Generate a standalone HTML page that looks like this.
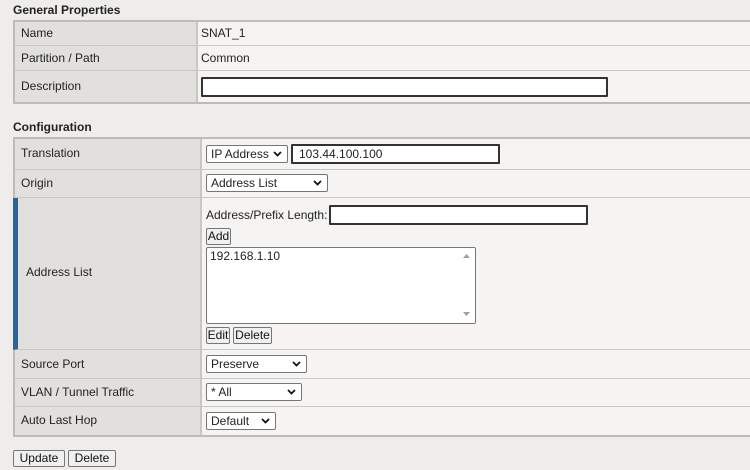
<!DOCTYPE html>
<html><head><style>
body{margin:0;width:750px;height:470px;background:#eeedeb;font-family:"Liberation Sans",Arial,sans-serif;font-size:12px;color:#222;position:relative;overflow:hidden}
.a{position:absolute}
h{position:absolute;font-weight:bold;font-size:12px;left:13px}
.l{position:absolute;background:#e1e0dd;border-bottom:1px solid #c8c7c4;box-sizing:border-box;padding-left:6px}
.v{position:absolute;background:#f5f4f2;border-bottom:1px solid #c8c7c4;border-left:2px solid #c8c7c4;box-sizing:border-box;padding-left:3px;width:560px}
.sel{position:absolute;background:#fff;border:1px solid #767676;border-radius:2px;box-sizing:border-box;height:18px;padding:1px 4px;font-size:12px;line-height:14px}
.sel svg{position:absolute;right:5px;top:5px}
.inp{position:absolute;background:#fff;border:2px solid #333;box-sizing:border-box;border-radius:1px}
.btn{position:absolute;background:#f0f0f0;border:1px solid #767676;border-radius:2px;box-sizing:border-box;height:17px;line-height:15px;padding:0;text-align:center;font-size:12px;color:#111}
</style></head><body>
<h style="top:3px">General Properties</h>
<div class="a" style="left:13px;top:20px;width:737px;height:84px;border:2px solid #bdbcb9;border-right:none;box-sizing:border-box"></div>
<div class="l" style="left:15px;top:22px;width:181px;height:24px;line-height:22px">Name</div>
<div class="v" style="left:196px;top:22px;height:24px;line-height:22px">SNAT_1</div>
<div class="l" style="left:15px;top:46px;width:181px;height:25px;line-height:24px">Partition / Path</div>
<div class="v" style="left:196px;top:46px;height:25px;line-height:24px">Common</div>
<div class="l" style="left:15px;top:71px;width:181px;height:31px;line-height:30px;border-bottom:none">Description</div>
<div class="v" style="left:196px;top:71px;height:31px;border-bottom:none"></div>
<div class="inp" style="left:201px;top:77px;width:407px;height:20px"></div>

<h style="top:120px">Configuration</h>
<div class="a" style="left:13px;top:137px;width:737px;height:300px;border:2px solid #bdbcb9;border-right:none;box-sizing:border-box"></div>
<div class="l" style="left:15px;top:139px;width:185px;height:31px;padding-top:7px">Translation</div>
<div class="v" style="left:200px;top:139px;height:31px"></div>
<div class="sel" style="left:206px;top:145px;width:82px">IP Address<svg width="9" height="6"><path d="M1 1l3.5 3.5L8 1" stroke="#111" stroke-width="1.8" fill="none"/></svg></div>
<div class="inp" style="left:291px;top:144px;width:209px;height:20px;padding:1px 6px;line-height:14px">103.44.100.100</div>
<div class="l" style="left:15px;top:170px;width:185px;height:28px;padding-top:6px">Origin</div>
<div class="v" style="left:200px;top:170px;height:28px"></div>
<div class="sel" style="left:206px;top:174px;width:122px">Address List<svg width="9" height="6"><path d="M1 1l3.5 3.5L8 1" stroke="#111" stroke-width="1.8" fill="none"/></svg></div>
<div class="l" style="top:198px;height:152px;line-height:148px;padding-left:8px;border-left:5px solid #2e6396;left:13px;width:187px">Address List</div>
<div class="v" style="left:200px;top:198px;height:152px"></div>
<div class="a" style="left:206px;top:208px">Address/Prefix Length:</div>
<div class="inp" style="left:329px;top:205px;width:259px;height:20px"></div>
<div class="btn" style="left:206px;top:228px;width:25px">Add</div>
<div class="a" style="left:206px;top:247px;width:270px;height:77px;background:#fff;border:1px solid #767676;border-radius:2px;box-sizing:border-box;padding:1px 3px">192.168.1.10
<svg class="a" style="right:4px;top:5px" width="8" height="64"><path d="M0 5h7L3.5 1z M0 59h7L3.5 63z" fill="#a0a0a0"/></svg></div>
<div class="btn" style="left:206px;top:327px;width:24px">Edit</div>
<div class="btn" style="left:233px;top:327px;width:39px">Delete</div>
<div class="l" style="left:15px;top:350px;width:185px;height:29px;padding-top:7px">Source Port</div>
<div class="v" style="left:200px;top:350px;height:29px"></div>
<div class="sel" style="left:206px;top:355px;width:101px">Preserve<svg width="9" height="6"><path d="M1 1l3.5 3.5L8 1" stroke="#111" stroke-width="1.8" fill="none"/></svg></div>
<div class="l" style="left:15px;top:379px;width:185px;height:28px;padding-top:6px">VLAN / Tunnel Traffic</div>
<div class="v" style="left:200px;top:379px;height:28px"></div>
<div class="sel" style="left:206px;top:383px;width:96px">* All<svg width="9" height="6"><path d="M1 1l3.5 3.5L8 1" stroke="#111" stroke-width="1.8" fill="none"/></svg></div>
<div class="l" style="left:15px;top:407px;width:185px;height:28px;padding-top:6px;border-bottom:none">Auto Last Hop</div>
<div class="v" style="left:200px;top:407px;height:28px;border-bottom:none"></div>
<div class="sel" style="left:206px;top:412px;width:70px">Default<svg width="9" height="6"><path d="M1 1l3.5 3.5L8 1" stroke="#111" stroke-width="1.8" fill="none"/></svg></div>

<div class="btn" style="left:13px;top:450px;width:52px">Update</div>
<div class="btn" style="left:68px;top:450px;width:48px">Delete</div>
</body></html>
